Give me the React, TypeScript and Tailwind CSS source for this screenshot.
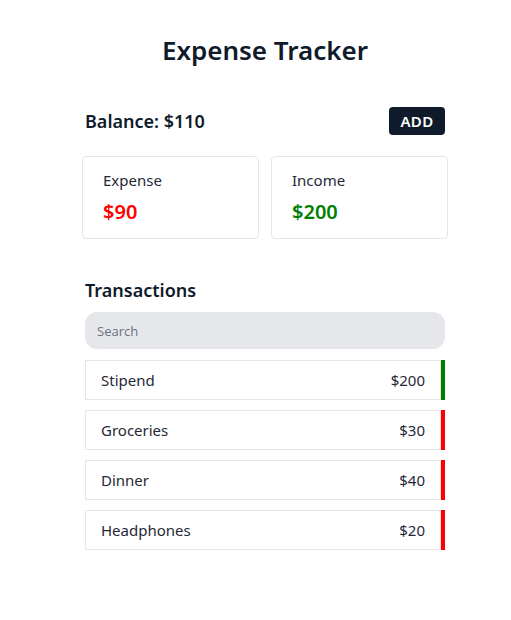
import React, { useState } from 'react';

const TRANSACTIONS = [
  { id: 1, name: 'Stipend', amount: 200, type: 'income' },
  { id: 2, name: 'Groceries', amount: 30, type: 'expense' },
  { id: 3, name: 'Dinner', amount: 40, type: 'expense' },
  { id: 4, name: 'Headphones', amount: 20, type: 'expense' },
];

const font = { fontFamily: '"Noto Sans", "Open Sans", sans-serif' };

const App = () => {
  const [query, setQuery] = useState('');

  const expense = TRANSACTIONS.filter(t => t.type === 'expense').reduce((s, t) => s + t.amount, 0);
  const income = TRANSACTIONS.filter(t => t.type === 'income').reduce((s, t) => s + t.amount, 0);
  const shown = TRANSACTIONS.filter(t => t.name.toLowerCase().includes(query.toLowerCase()));

  return (
    <div className="min-h-screen bg-white text-[#0f1b2a]" style={font}>
      <div className="ml-[82px] w-[366px] pt-[31px] flex flex-col">
        <h1 className="text-[26px] leading-[38px] font-semibold text-center">Expense Tracker</h1>

        <div className="mt-[38px] mx-[3px] flex items-center justify-between">
          <span className="text-[18px] font-semibold">Balance: ${income - expense}</span>
          <button className="h-[28px] w-[56px] rounded bg-[#0f1b2a] text-white text-[15px] font-semibold tracking-wide">ADD</button>
        </div>

        <div className="mt-[21px] grid grid-cols-2 gap-[12px]">
          <div className="h-[83px] rounded border border-[#e6e6e6] pl-[20px] pt-[13px]">
            <div className="text-[15px] leading-[20px] text-[#1f2937]">Expense</div>
            <div className="mt-[9px] text-[20px] leading-[26px] font-semibold text-[#ff0000]">${expense}</div>
          </div>
          <div className="h-[83px] rounded border border-[#e6e6e6] pl-[20px] pt-[13px]">
            <div className="text-[15px] leading-[20px] text-[#1f2937]">Income</div>
            <div className="mt-[9px] text-[20px] leading-[26px] font-semibold text-[#008000]">${income}</div>
          </div>
        </div>

        <div className="mx-[3px] mt-[38px] flex flex-col">
          <h2 className="text-[18px] leading-[26px] font-semibold">Transactions</h2>
          <input
            value={query}
            onChange={e => setQuery(e.target.value)}
            placeholder="Search"
            className="mt-[9px] h-[37px] rounded-xl bg-[#e5e7eb] px-[12px] text-[13px] outline-none placeholder:text-[#6b7280]"
            style={{ fontFamily: '"Open Sans", sans-serif' }}
          />
          <div className="mt-[11px] flex flex-col gap-[10px]">
            {shown.map(t => (
              <div key={t.id} className="flex h-[40px]">
                <div className="flex-1 flex items-center justify-between border border-[#e6e6e6] pl-[15px] pr-[15px] text-[15px] text-[#1f2937]">
                  <span>{t.name}</span>
                  <span>${t.amount}</span>
                </div>
                <div className={t.type === 'income' ? 'w-[4px] bg-[#008000]' : 'w-[4px] bg-[#ff0000]'} />
              </div>
            ))}
          </div>
        </div>
      </div>
    </div>
  );
};

export default App;
